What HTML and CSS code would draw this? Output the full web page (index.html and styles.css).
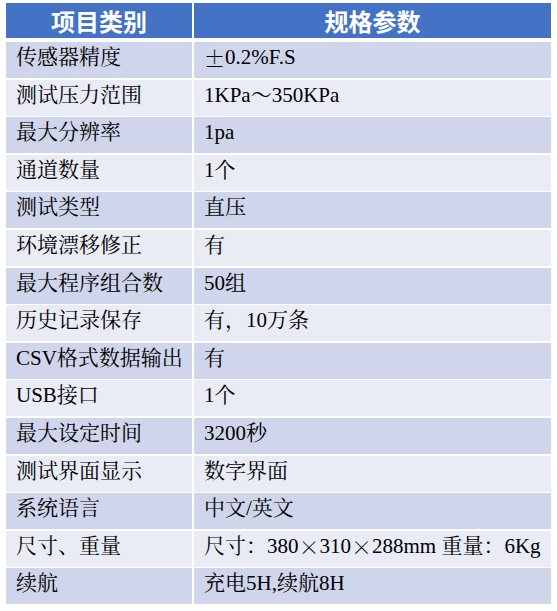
FILE: index.html
```html
<!DOCTYPE html>
<html lang="zh-CN">
<head>
<meta charset="utf-8">
<title>规格参数</title>
<link rel="stylesheet" href="styles.css">
</head>
<body>
<div class="spec">
  <div class="hd">项目类别</div><div class="hd">规格参数</div>
  <div class="c odd">传感器精度</div><div class="c odd"><span class="fw">±</span>0.2%F.S</div>
  <div class="c even">测试压力范围</div><div class="c even">1KPa～350KPa</div>
  <div class="c odd">最大分辨率</div><div class="c odd">1pa</div>
  <div class="c even">通道数量</div><div class="c even">1个</div>
  <div class="c odd">测试类型</div><div class="c odd">直压</div>
  <div class="c even">环境漂移修正</div><div class="c even">有</div>
  <div class="c odd">最大程序组合数</div><div class="c odd">50组</div>
  <div class="c even">历史记录保存</div><div class="c even">有，10万条</div>
  <div class="c odd">CSV格式数据输出</div><div class="c odd">有</div>
  <div class="c even">USB接口</div><div class="c even">1个</div>
  <div class="c odd">最大设定时间</div><div class="c odd">3200秒</div>
  <div class="c even">测试界面显示</div><div class="c even">数字界面</div>
  <div class="c odd">系统语言</div><div class="c odd">中文/英文</div>
  <div class="c even">尺寸、重量</div><div class="c even">尺寸：380<span class="fw">×</span>310<span class="fw">×</span>288mm 重量：6Kg</div>
  <div class="c odd">续航</div><div class="c odd">充电5H,续航8H</div>
</div>
</body>
</html>
```
FILE: styles.css
```css
html, body {
  margin: 0;
  padding: 0;
  background: #ffffff;
}

.spec {
  display: grid;
  grid-template-columns: 186px 357px;
  column-gap: 2px;
  row-gap: 1.6px;
  margin: 3px 0 0 6px;
}

.hd {
  height: 35px;
  margin-bottom: 2.4px;
  background: #4472c4;
  color: #ffffff;
  font-family: "Noto Sans CJK SC", sans-serif;
  font-weight: 700;
  font-size: 24px;
  display: flex;
  align-items: center;
  justify-content: center;
  line-height: 1;
}

.c {
  height: 36px;
  box-sizing: border-box;
  padding: 0 0 5px 10px;
  display: flex;
  align-items: center;
  font-family: "Liberation Serif", "Noto Serif CJK SC", "Noto Sans CJK SC", serif;
  font-size: 21px;
  line-height: 1;
  color: #000000;
  white-space: nowrap;
}

.odd {
  background: #cfd5ea;
}

.even {
  background: #e9ebf5;
}

.fw {
  font-family: "Noto Serif CJK SC", "Noto Sans CJK SC", sans-serif;
}
```
